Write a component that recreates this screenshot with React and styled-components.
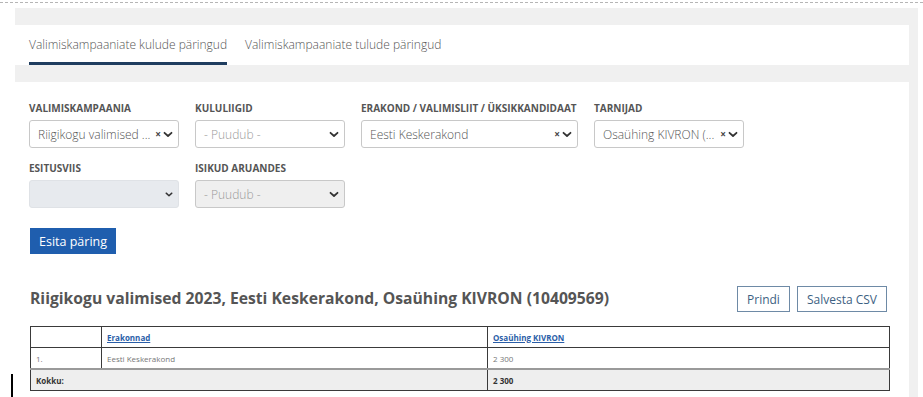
import React from "react";
import styled, { createGlobalStyle } from "styled-components";

const Global = createGlobalStyle`
  html, body { margin: 0; padding: 0; background: #fff; }
  body { font-family: "Open Sans", "Noto Sans", sans-serif; color: #555; }
  #root { position: relative; }
`;

const TopRule = styled.div`
  margin-top: 2px;
  border-top: 1px dashed #b5b5b5;
`;

const Shell = styled.div`
  margin: 5px 5px 0 15px;
  background: #f0f0f0;
  padding: 17px 9px 0 0;
`;

const TabBar = styled.div`
  background: #fff;
  height: 40px;
  display: flex;
  padding-left: 14px;
  gap: 18px;
`;

const Tab = styled.div`
  box-sizing: border-box;
  height: 40px;
  display: flex;
  align-items: center;
  padding-top: 1px;
  font-size: 12px;
  font-weight: 300;
  color: #555;
  border-bottom: 3px solid ${(p) => (p.$active ? "#1f3d5f" : "transparent")};
`;

const Content = styled.div`
  margin-top: 17px;
  background: #fff;
  padding: 19px 19px 10px 14px;
`;

const FormRow = styled.div`
  display: flex;
  gap: 16px;
  margin-bottom: ${(p) => p.$mb || 0}px;
`;

const Field = styled.div`
  width: ${(p) => p.$w}px;
  display: flex;
  flex-direction: column;
  gap: 4px;
`;

const Label = styled.div`
  font-size: 10px;
  font-weight: 700;
  color: #555;
  line-height: 15px;
  white-space: nowrap;
`;

const SelectBox = styled.div`
  box-sizing: border-box;
  height: 28px;
  border: 1px solid ${(p) => (p.$variant === "blank" ? "#dfe2e6" : "#c8c8c8")};
  border-radius: 3px;
  background: ${(p) =>
    p.$variant === "blank" ? "#e7eaee" : p.$variant === "disabled" ? "#efefef" : "#fff"};
  display: flex;
  align-items: center;
  padding: 0 4px 0 8px;
  font-size: 12px;
  font-weight: 300;
  color: ${(p) => (p.$muted ? "#9a9a9a" : "#555")};
`;

const SelText = styled.span`
  flex: 1;
  white-space: nowrap;
  min-width: 0;
`;

const Clear = styled.span`
  font-size: 10px;
  color: #444;
  margin: 0 2px 0 1px;
  font-weight: 700;
`;

const Chev = ({ small }) => (
  <svg width={small ? 8 : 10} height="7" viewBox="0 0 10 7" style={{ marginRight: 1, flex: "none" }}>
    <path d="M1.5 1.8 L5 5 L8.5 1.8" fill="none" stroke="#333" strokeWidth="1.8" strokeLinecap="round" strokeLinejoin="round" />
  </svg>
);

const Select = ({ text, clear, variant, muted }) => (
  <SelectBox $variant={variant} $muted={muted}>
    <SelText>{text}</SelText>
    {clear && <Clear>×</Clear>}
    <Chev small={variant === "blank"} />
  </SelectBox>
);

const PrimaryButton = styled.button`
  margin-left: 1px;
  height: 26px;
  padding: 0 9px;
  background: #1f5eae;
  color: #fff;
  border: none;
  font-family: inherit;
  font-size: 12.5px;
  border-radius: 0;
`;

const TitleRow = styled.div`
  margin-top: 32px;
  display: flex;
  align-items: center;
  justify-content: space-between;
  padding-left: 1px;
  padding-right: 3px;
`;

const Title = styled.h2`
  margin: 0;
  font-size: 15.7px;
  font-weight: 700;
  color: #555;
  margin-top: -2px;
`;

const Actions = styled.div`
  display: flex;
  gap: 7px;
`;

const OutlineButton = styled.button`
  height: 26px;
  padding: 0 9px;
  background: #fff;
  border: 1px solid #6e8aa6;
  color: #3d5f82;
  font-family: inherit;
  font-size: 12px;
  font-weight: 400;
`;

const Table = styled.table`
  margin-top: 14px;
  margin-left: 1px;
  width: 860px;
  border-collapse: collapse;
  font-size: 8px;
`;

const Td = styled.td`
  border: 1px solid #3a3a3a;
  height: 20px;
  padding: 0 5px;
  width: ${(p) => (p.$w ? p.$w + "px" : "auto")};
  color: ${(p) => (p.$bold ? "#333" : "#777")};
  font-weight: ${(p) => (p.$bold ? 700 : 400)};
`;

const Tr = styled.tr`
  background: ${(p) => (p.$total ? "#eeeeee" : "#fff")};
  ${(p) => p.$total && "& > td { border-top: 2px solid #9a9a9a; }"}
`;

const HeadLink = styled.a`
  color: #2a5ea8;
  font-weight: 700;
  text-decoration: underline;
`;

const Caret = styled.div`
  position: absolute;
  left: 11px;
  top: 372px;
  width: 2px;
  height: 25px;
  background: #000;
`;

export default function App() {
  return (
    <>
      <Global />
      <TopRule />
      <Shell>
        <TabBar>
          <Tab $active>Valimiskampaaniate kulude päringud</Tab>
          <Tab>Valimiskampaaniate tulude päringud</Tab>
        </TabBar>
        <Content>
          <FormRow $mb={13}>
            <Field $w={150}>
              <Label>VALIMISKAMPAANIA</Label>
              <Select text="Riigikogu valimised ..." clear />
            </Field>
            <Field $w={150}>
              <Label>KULULIIGID</Label>
              <Select text="- Puudub -" muted />
            </Field>
            <Field $w={217}>
              <Label>ERAKOND / VALIMISLIIT / ÜKSIKKANDIDAAT</Label>
              <Select text="Eesti Keskerakond" clear />
            </Field>
            <Field $w={150}>
              <Label>TARNIJAD</Label>
              <Select text="Osaühing KIVRON (..." clear />
            </Field>
          </FormRow>
          <FormRow $mb={20}>
            <Field $w={150}>
              <Label>ESITUSVIIS</Label>
              <Select text="" variant="blank" />
            </Field>
            <Field $w={150}>
              <Label>ISIKUD ARUANDES</Label>
              <Select text="- Puudub -" variant="disabled" muted />
            </Field>
          </FormRow>
          <PrimaryButton>Esita päring</PrimaryButton>
          <TitleRow>
            <Title>Riigikogu valimised 2023, Eesti Keskerakond, Osaühing KIVRON (10409569)</Title>
            <Actions>
              <OutlineButton>Prindi</OutlineButton>
              <OutlineButton>Salvesta CSV</OutlineButton>
            </Actions>
          </TitleRow>
          <Table>
            <tbody>
              <Tr>
                <Td $w={60}></Td>
                <Td $w={375}>
                  <HeadLink>Erakonnad</HeadLink>
                </Td>
                <Td>
                  <HeadLink>Osaühing KIVRON</HeadLink>
                </Td>
              </Tr>
              <Tr>
                <Td>1.</Td>
                <Td>Eesti Keskerakond</Td>
                <Td>2 300</Td>
              </Tr>
              <Tr $total>
                <Td $bold colSpan={2}>Kokku:</Td>
                <Td $bold>2 300</Td>
              </Tr>
            </tbody>
          </Table>
        </Content>
      </Shell>
      <Caret />
    </>
  );
}
